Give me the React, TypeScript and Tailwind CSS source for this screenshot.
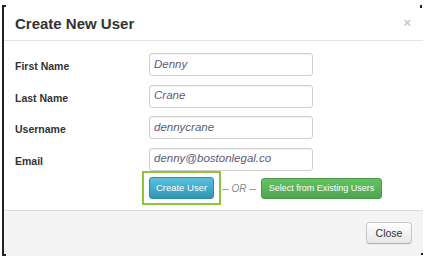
import React from "react";

type Field = { label: string; value: string };

const fields: Field[] = [
  { label: "First Name", value: "Denny" },
  { label: "Last Name", value: "Crane" },
  { label: "Username", value: "dennycrane" },
  { label: "Email", value: "denny@bostonlegal.co" },
];

export default function App() {
  return (
    <div
      className="relative w-[431px] h-[261px] bg-white overflow-hidden"
      style={{ fontFamily: '"Liberation Sans", Arial, sans-serif' }}
    >
      {/* corner marks of the cropped window */}
      <span className="absolute left-[2px] top-[5px] w-[4px] h-[2px] bg-[#222]" />
      <span className="absolute left-[2px] top-[254px] w-[4px] h-[2px] bg-[#222]" />
      <span className="absolute left-[420px] top-[5px] w-[2px] h-[3px] bg-[#222]" />
      <span className="absolute left-[421px] top-[253px] w-[2px] h-[2px] bg-[#222]" />

      <div className="ml-[2px] mt-[5px] w-[421px] h-[251px] border-l-2 border-[#222] flex flex-col">
        {/* header */}
        <div className="h-[36px] flex items-center justify-between pl-[11px] pr-[12px] border-b border-[#e5e5e5]">
          <h3 className="text-[15px] font-bold text-[#333] leading-none pt-[1px]">Create New User</h3>
          <span className="text-[13px] font-bold text-[#c8c8c8] leading-none">×</span>
        </div>

        {/* body */}
        <div className="flex-1 pl-[11px] pt-[12px]">
          <div className="flex flex-col gap-[8.5px]">
            {fields.map((f) => (
              <div key={f.label} className="flex items-center h-[23px]">
                <label className="w-[134px] pt-[5px] text-[10.5px] font-bold text-[#333]">{f.label}</label>
                <div className="w-[164px] h-[23px] flex items-center px-[4px] rounded-[3px] border border-[#cfcfcf] shadow-[inset_0_1px_1px_rgba(0,0,0,0.06)] bg-white">
                  <span className="text-[11.5px] italic text-[#5c5c78] leading-none">{f.value}</span>
                </div>
              </div>
            ))}
          </div>

          <div className="flex items-center mt-[0.5px] ml-[127px]">
            {/* focus ring */}
            <div className="border-2 border-[#8cc63f] px-[5px] py-[4px]">
              <button
                type="button"
                className="block w-[65px] h-[22px] rounded-[3px] border border-[#2f8aa8] bg-gradient-to-b from-[#5bc0de] to-[#2f96b4] text-white text-[9.5px] leading-none"
              >
                Create User
              </button>
            </div>
            <span className="ml-[1px] text-[10px] italic text-[#888]">-- OR --</span>
            <button
              type="button"
              className="ml-[5px] w-[121px] h-[21px] rounded-[3px] border border-[#4a9a4a] bg-gradient-to-b from-[#62c462] to-[#51a351] text-white text-[9px] leading-none"
            >
              Select from Existing Users
            </button>
          </div>
        </div>

        {/* footer */}
        <div className="h-[46px] border-t border-[#ddd] bg-[#f4f4f4] flex items-start justify-end pt-[11px] pr-[11px]">
          <button
            type="button"
            className="w-[46px] h-[22px] rounded-[4px] border border-[#c8c8c8] border-b-[#b3b3b3] bg-gradient-to-b from-white to-[#e6e6e6] text-[#333] text-[10.5px] leading-none shadow-[0_1px_1px_rgba(0,0,0,0.05)]"
          >
            Close
          </button>
        </div>
      </div>
    </div>
  );
}
